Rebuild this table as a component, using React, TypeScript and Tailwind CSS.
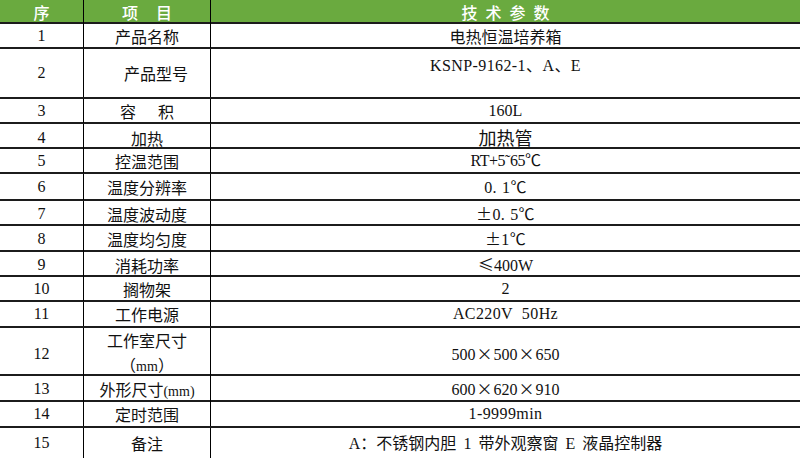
const cjk = "font-['Noto_Sans_CJK_SC',sans-serif]";
const serif = "font-['Liberation_Serif','Noto_Sans_CJK_SC',serif]";
const half = "font-['Liberation_Serif','Noto_Sans_CJK_SC',serif] text-[16px] tracking-[0.4px]";

type RowProps = {
  h: string;
  no: string;
  item: React.ReactNode;
  children: React.ReactNode;
  valueClass?: string;
  itemClass?: string;
};

function Row({ h, no, item, children, valueClass = "items-center", itemClass = "" }: RowProps) {
  return (
    <div className={`grid grid-cols-[84px_127px_1fr] border-b-2 border-[#1c1c1c] ${h}`}>
      <div className={`flex items-center justify-center border-r border-black text-[16px] ${serif}`}>
        {no}
      </div>
      <div className={`flex items-center justify-center border-r border-black text-[16px] ${cjk} ${itemClass}`}>
        {item}
      </div>
      <div className={`flex justify-center ${valueClass}`}>{children}</div>
    </div>
  );
}

function X() {
  return <span className={`mx-[1px] ${cjk}`}>×</span>;
}

export default function App() {
  return (
    <div className="h-[458px] w-[800px] overflow-hidden bg-white text-[#111]">
      {/* header */}
      <div className="grid h-[24px] grid-cols-[84px_127px_1fr] border-b-2 border-[#1c1c1c] bg-[#6aaa3f] text-[16px] font-medium text-white">
        <div className={`flex items-center justify-center border-r border-black ${cjk}`}>序</div>
        <div className={`flex items-center justify-center gap-[18px] border-r border-black ${cjk}`}>
          <span>项</span>
          <span>目</span>
        </div>
        <div className={`flex items-center justify-center gap-[8px] ${cjk}`}>
          <span>技</span>
          <span>术</span>
          <span>参</span>
          <span>数</span>
        </div>
      </div>

      <Row h="h-[25px]" no="1" item="产品名称">
        <span className={`text-[16px] ${cjk}`}>电热恒温培养箱</span>
      </Row>
      <Row h="h-[50px]" no="2" item="产品型号" itemClass="pl-[18px]" valueClass="items-start pt-[3px]">
        <span className={half}>
          KSNP-9162-1<span className={cjk}>、</span>A<span className={cjk}>、</span>E
        </span>
      </Row>
      <Row h="h-[25px]" no="3" item={<span className="flex gap-[22px]"><span>容</span><span>积</span></span>}>
        <span className={`text-[16px] ${serif}`}>160L</span>
      </Row>
      <Row h="h-[25px]" no="4" item="加热">
        <span className={`text-[18px] ${cjk}`}>加热管</span>
      </Row>
      <Row h="h-[25px]" no="5" item="控温范围">
        <span className={`text-[16px] tracking-[-0.5px] ${serif}`}>RT+5˜65℃</span>
      </Row>
      <Row h="h-[27px]" no="6" item="温度分辨率">
        <span className={half}>
          0.<span className="ml-[5px]">1</span><span className={cjk}>℃</span>
        </span>
      </Row>
      <Row h="h-[25px]" no="7" item="温度波动度">
        <span className={half}>
          <span className={cjk}>±</span>0.<span className="ml-[5px]">5</span><span className={cjk}>℃</span>
        </span>
      </Row>
      <Row h="h-[26px]" no="8" item="温度均匀度">
        <span className={half}>
          <span className={cjk}>±</span>1<span className={cjk}>℃</span>
        </span>
      </Row>
      <Row h="h-[25px]" no="9" item="消耗功率">
        <span className={`text-[16px] ${serif}`}>
          <span className={cjk}>≤</span>400W
        </span>
      </Row>
      <Row h="h-[25px]" no="10" item="搁物架">
        <span className={`text-[16px] ${serif}`}>2</span>
      </Row>
      <Row h="h-[26px]" no="11" item="工作电源">
        <span className={half}>AC220V&nbsp;&nbsp;50Hz</span>
      </Row>
      <Row
        h="h-[48px]"
        no="12"
        item={
          <span className="flex flex-col items-center leading-[24px]">
            <span>工作室尺寸</span>
            <span>
              （<span className={`text-[14px] ${serif}`}>mm</span>）
            </span>
          </span>
        }
      >
        <span className={`text-[16px] ${serif}`}>
          500<X />500<X />650
        </span>
      </Row>
      <Row
        h="h-[26px]"
        no="13"
        item={
          <span>
            外形尺寸<span className={`text-[14px] ${serif}`}>(mm)</span>
          </span>
        }
      >
        <span className={`text-[16px] ${serif}`}>
          600<X />620<X />910
        </span>
      </Row>
      <Row h="h-[26px]" no="14" item="定时范围">
        <span className={half}>1-9999min</span>
      </Row>
      <Row h="h-[32px]" no="15" item="备注">
        <span className={`text-[16px] ${cjk}`}>
          <span className={serif}>A</span>：不锈钢内胆<span className={`px-[3px] ${serif}`}>&nbsp;1&nbsp;</span>带外观察窗
          <span className={`px-[3px] ${serif}`}>&nbsp;E&nbsp;</span>液晶控制器
        </span>
      </Row>
    </div>
  );
}
